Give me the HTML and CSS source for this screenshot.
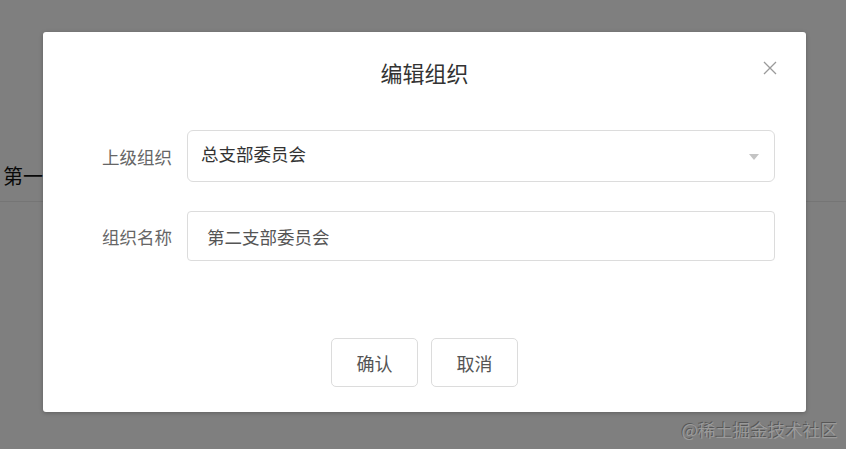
FILE: index.html
```html
<!DOCTYPE html>
<html lang="zh">
<head>
<meta charset="utf-8">
<title>编辑组织</title>
<link rel="stylesheet" href="styles.css">
</head>
<body>
<div class="page">
  <div class="table-row"><span class="cell">第一</span></div>
</div>
<div class="mask"></div>
<div class="dialog">
  <div class="dialog-header">
    <h2 class="dialog-title">编辑组织</h2>
    <button class="close" aria-label="关闭">
      <svg width="14" height="14" viewBox="0 0 14 14"><path d="M1 1L13 13M13 1L1 13" stroke="#9a9a9a" stroke-width="1.3" fill="none"/></svg>
    </button>
  </div>
  <div class="dialog-body">
    <div class="form-row">
      <label class="form-label">上级组织</label>
      <div class="select">
        <span class="select-value">总支部委员会</span>
        <span class="caret"></span>
      </div>
    </div>
    <div class="form-row">
      <label class="form-label">组织名称</label>
      <div class="input">第二支部委员会</div>
    </div>
  </div>
  <div class="dialog-footer">
    <button class="btn">确认</button>
    <button class="btn">取消</button>
  </div>
</div>
<div class="watermark">@稀土掘金技术社区</div>
</body>
</html>
```
FILE: styles.css
```css
* { box-sizing: border-box; }
html, body { margin: 0; padding: 0; }
body {
  width: 846px;
  height: 449px;
  overflow: hidden;
  background: #fff;
  font-family: "Noto Sans CJK SC", "Noto Sans", sans-serif;
  position: relative;
}
.page { padding-top: 152px; }
.table-row {
  height: 50px;
  border-bottom: 1px solid #ebebeb;
  display: flex;
  align-items: center;
  padding-left: 3px;
}
.cell { font-size: 20px; color: #111; margin-top: -3px; white-space: nowrap; }
.mask {
  position: absolute;
  inset: 0;
  background: rgba(0, 0, 0, 0.5);
}
.dialog {
  position: absolute;
  left: 43px;
  top: 32px;
  width: 763px;
  height: 380px;
  background: #fff;
  border-radius: 3px;
  box-shadow: 0 1px 4px rgba(0,0,0,0.25);
  display: flex;
  flex-direction: column;
}
.dialog-header {
  position: relative;
  height: 98px;
  display: flex;
  justify-content: center;
  padding-top: 24px;
}
.dialog-title {
  margin: 0;
  font-size: 22px;
  font-weight: normal;
  color: #333;
  line-height: 32px;
}
.close {
  position: absolute;
  right: 29px;
  top: 29px;
  width: 14px;
  height: 14px;
  padding: 0;
  border: 0;
  background: none;
  display: flex;
}
.dialog-body {
  padding: 0 31px 0 39px;
  display: flex;
  flex-direction: column;
  gap: 29px;
}
.form-row {
  display: flex;
  align-items: center;
}
.form-label {
  width: 90px;
  margin-right: 15px;
  text-align: right;
  font-size: 17.5px;
  color: #666;
}
.select {
  flex: 1;
  height: 52px;
  border: 1px solid #dcdcdc;
  border-radius: 6px;
  display: flex;
  align-items: center;
  justify-content: space-between;
  padding: 0 15px 0 13px;
}
.select-value {
  font-size: 17.5px;
  color: #333;
  margin-top: -6px;
}
.caret {
  width: 0;
  height: 0;
  border-left: 5px solid transparent;
  border-right: 5px solid transparent;
  border-top: 6px solid #c4c4c4;
  margin-top: 2px;
}
.input {
  flex: 1;
  height: 50px;
  border: 1px solid #dcdcdc;
  border-radius: 4px;
  display: flex;
  align-items: center;
  padding-left: 19px;
  font-size: 17.5px;
  color: #555;
}
.dialog-footer {
  margin-top: auto;
  padding-bottom: 25px;
  display: flex;
  justify-content: center;
  gap: 13px;
}
.btn {
  width: 87px;
  height: 49px;
  border: 1px solid #dcdcdc;
  border-radius: 5px;
  background: #fff;
  font-family: inherit;
  font-size: 18px;
  color: #555;
  padding: 0;
}
.watermark {
  position: absolute;
  right: 8px;
  bottom: 7px;
  font-size: 17.5px;
  color: #9a9a9a;
  text-shadow: -1px -1px 0 rgba(60,60,60,0.6);
  letter-spacing: 0;
}
```
